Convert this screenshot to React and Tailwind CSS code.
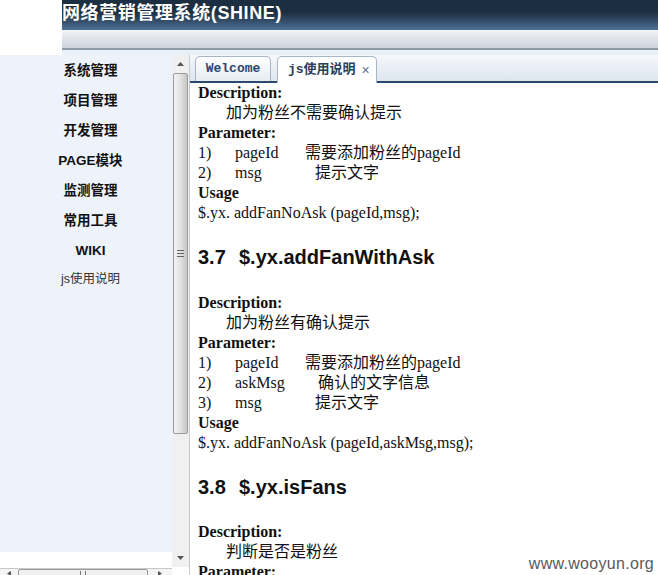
import React from "react";

const serif = { fontFamily: '"Liberation Serif", "Noto Sans CJK SC", serif' };

const menu = ["系统管理", "项目管理", "开发管理", "PAGE模块", "监测管理", "常用工具", "WIKI"];

const Cn = ({ children }) => (
  <span className="font-['Noto_Sans_CJK_SC',sans-serif] font-normal leading-[16px] align-baseline">{children}</span>
);

const Row = ({ className = "", children }) => (
  <div className={`h-[20px] leading-[20px] whitespace-nowrap ${className}`}>{children}</div>
);

const Label = ({ children }) => <Row className="font-bold">{children}</Row>;

const Param = ({ n, name, w, desc }) => (
  <Row className="flex">
    <span className="w-[37px]">{n}</span>
    <span style={{ width: w }}>{name}</span>
    <span>{desc}</span>
  </Row>
);

const Heading = ({ num, text, className }) => (
  <div className={`h-[26px] leading-[26px] text-[20px] font-bold font-['Liberation_Sans',Arial,sans-serif] text-[#111] ${className}`}>
    <span className="inline-block w-[41px]">{num}</span>
    {text}
  </div>
);

export default function App() {
  return (
    <div className="w-[658px] h-[575px] overflow-hidden relative bg-white flex flex-col">
      {/* HEADER */}
      <div className="flex h-[55px] shrink-0">
        <div className="w-[62px] bg-white" />
        <div className="flex-1 flex flex-col">
          <div className="h-[30px] bg-linear-to-b from-[#1c2e41] from-40% to-[#4d7196] flex items-center">
            <span className="text-white font-bold text-[18px] tracking-[0.6px] font-['Liberation_Sans','Noto_Sans_CJK_SC',sans-serif] -mt-[4px]">
              网络营销管理系统(SHINE)
            </span>
          </div>
          <div className="h-[18px] bg-linear-to-b from-[#f2f3f6] to-[#cdd3de]" />
          <div className="h-[2px] bg-[#8e9aa7]" />
          <div className="flex-1 bg-[#eaf0f8]" />
        </div>
      </div>

      {/* BODY */}
      <div className="flex flex-1 min-h-0">
        {/* SIDEBAR */}
        <div className="w-[172px] shrink-0 flex flex-col">
          <div className="h-[497px] bg-[#eef3fb] pl-[9px] pt-[7px] font-['Liberation_Sans','Noto_Sans_CJK_SC',sans-serif]">
            {menu.map((m) => (
              <div key={m} className="h-[30px] leading-[18px] text-center text-[13.5px] font-bold text-[#111]">
                {m}
              </div>
            ))}
            <div className="text-center text-[12.5px] text-[#333] -mt-[2px]">js使用说明</div>
          </div>
          <div className="h-[16px] bg-white" />
          <div className="h-[7px] flex items-start border-t border-[#c8c8c8] bg-[#f4f4f4] overflow-hidden">
            <div className="w-[18px] flex justify-center pt-[2px]">
              <svg width="4" height="5" viewBox="0 0 4 5"><path d="M4 0 L0 2.5 L4 5 Z" fill="#555" /></svg>
            </div>
            <div className="w-[130px] h-[8px] border border-[#9a9a9a] bg-[#f0f0f0] rounded-[2px] flex justify-center">
              <span className="w-[6px] h-[4px] mt-[1px] border-x border-[#777]" />
            </div>
            <div className="w-[24px] flex justify-center pt-[2px]">
              <svg width="4" height="5" viewBox="0 0 4 5"><path d="M0 0 L4 2.5 L0 5 Z" fill="#555" /></svg>
            </div>
          </div>
        </div>

        {/* VERTICAL SCROLLBAR */}
        <div className="w-[17px] shrink-0 flex flex-col bg-[#f0f0f0] h-[512px]">
          <div className="h-[18px] flex items-center justify-center">
            <svg width="7" height="4" viewBox="0 0 7 4"><path d="M0 4 L3.5 0 L7 4 Z" fill="#555" /></svg>
          </div>
          <div className="h-[361px] mx-[1px] rounded-[2px] border border-[#9c9c9c] bg-linear-to-r from-[#f4f4f4] via-[#e2e2e2] to-[#c6c6c6] flex items-center justify-center">
            <div className="flex flex-col gap-[2px]">
              <div className="w-[7px] h-px bg-[#666]" />
              <div className="w-[7px] h-px bg-[#666]" />
              <div className="w-[7px] h-px bg-[#666]" />
            </div>
          </div>
          <div className="flex-1" />
          <div className="h-[18px] flex items-center justify-center">
            <svg width="7" height="4" viewBox="0 0 7 4"><path d="M0 0 L3.5 4 L7 0 Z" fill="#555" /></svg>
          </div>
        </div>

        {/* CONTENT */}
        <div className="flex-1 flex flex-col border-l border-[#c3cbd5] min-w-0">
          <div className="h-[28px] shrink-0 flex items-end gap-[6px] pl-[5px] bg-linear-to-b from-[#f6f8fb] to-[#dde5ee] border-b-2 border-[#2b4a6d]">
            <div className="w-[76px] h-[25px] rounded-t-[5px] border border-b-0 border-[#a7b6c9] bg-linear-to-b from-white to-[#e6ecf3] flex items-center justify-center text-[13px] font-bold text-[#2b4778] font-['Liberation_Mono',monospace]">
              Welcome
            </div>
            <div className="w-[100px] h-[27px] -mb-[2px] rounded-t-[5px] border border-b-0 border-[#a7b6c9] bg-white flex items-center pl-[10px] gap-[6px] text-[13px] text-[#2c3e5e] font-['Liberation_Mono','Noto_Sans_CJK_SC',monospace]">
              <span className="font-bold">js使用说明</span>
              <span className="text-[#5a7090] text-[14px] font-['Liberation_Sans',sans-serif]">×</span>
            </div>
          </div>

          <div className="flex-1 overflow-hidden px-[8px] text-[16px] leading-[20px] text-[#111]" style={serif}>
            <Label>Description:</Label>
            <Row className="pl-[28px]"><Cn>加为粉丝不需要确认提示</Cn></Row>
            <Label>Parameter:</Label>
            <Param n="1)" name="pageId" w={70} desc={<><Cn>需要添加粉丝的</Cn>pageId</>} />
            <Param n="2)" name="msg" w={80} desc={<Cn>提示文字</Cn>} />
            <Label>Usage</Label>
            <Row>$.yx. addFanNoAsk (pageId,msg);</Row>

            <Heading num="3.7" text="$.yx.addFanWithAsk" className="mt-[21px] mb-[23px]" />

            <Label>Description:</Label>
            <Row className="pl-[28px]"><Cn>加为粉丝有确认提示</Cn></Row>
            <Label>Parameter:</Label>
            <Param n="1)" name="pageId" w={70} desc={<><Cn>需要添加粉丝的</Cn>pageId</>} />
            <Param n="2)" name="askMsg" w={83} desc={<Cn>确认的文字信息</Cn>} />
            <Param n="3)" name="msg" w={80} desc={<Cn>提示文字</Cn>} />
            <Label>Usage</Label>
            <Row>$.yx. addFanNoAsk (pageId,askMsg,msg);</Row>

            <Heading num="3.8" text="$.yx.isFans" className="mt-[21px] mb-[22px]" />

            <Label>Description:</Label>
            <Row className="pl-[28px]"><Cn>判断是否是粉丝</Cn></Row>
            <Label>Parameter:</Label>
          </div>
        </div>
      </div>

      {/* WATERMARK */}
      <div className="absolute right-[4px] bottom-[3px] text-[16px] leading-[16px] text-[#5a5a5a] font-['Liberation_Sans',Arial,sans-serif] tracking-[0.3px]">
        www.wooyun.org
      </div>
    </div>
  );
}
